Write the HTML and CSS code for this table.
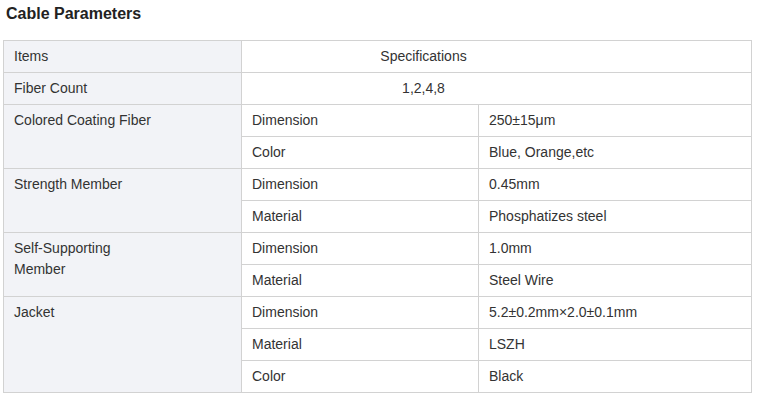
FILE: index.html
```html
<!DOCTYPE html>
<html>
<head>
<meta charset="utf-8">
<link rel="stylesheet" href="styles.css">
</head>
<body>
<div class="page">
  <h3 class="title">Cable Parameters</h3>
  <table class="params">
    <colgroup>
      <col class="c1"><col class="c2"><col class="c3">
    </colgroup>
    <tbody>
      <tr><td class="head">Items</td><td colspan="2" class="center">Specifications</td></tr>
      <tr><td class="head">Fiber Count</td><td colspan="2" class="center">1,2,4,8</td></tr>
      <tr><td class="head" rowspan="2">Colored Coating Fiber</td><td>Dimension</td><td>250±15μm</td></tr>
      <tr><td>Color</td><td>Blue, Orange,etc</td></tr>
      <tr><td class="head" rowspan="2">Strength Member</td><td>Dimension</td><td>0.45mm</td></tr>
      <tr><td>Material</td><td>Phosphatizes steel</td></tr>
      <tr><td class="head" rowspan="2">Self-Supporting<br>Member</td><td>Dimension</td><td>1.0mm</td></tr>
      <tr><td>Material</td><td>Steel Wire</td></tr>
      <tr><td class="head" rowspan="3">Jacket</td><td>Dimension</td><td>5.2±0.2mm×2.0±0.1mm</td></tr>
      <tr><td>Material</td><td>LSZH</td></tr>
      <tr><td>Color</td><td>Black</td></tr>
    </tbody>
  </table>
</div>
</body>
</html>
```
FILE: styles.css
```css
html, body {
  margin: 0;
  padding: 0;
  background: #ffffff;
}
.page {
  padding: 5px 0 0 3px;
  font-family: "Liberation Sans", Arial, sans-serif;
  color: #333333;
}
.title {
  margin: 0 0 0 3px;
  height: 35px;
  font-size: 16px;
  line-height: 18px;
  font-weight: bold;
  color: #222222;
}
.params {
  border-collapse: collapse;
  table-layout: fixed;
  width: 749px;
  font-size: 14px;
}
.c1 { width: 238px; }
.c2 { width: 237px; }
.c3 { width: 273px; }
.params td {
  border: 1px solid #d2d2d2;
  padding: 5px 10px 5px 10px;
  line-height: 21px;
  height: 21px;
  vertical-align: top;
  text-align: left;
}
.params td.head {
  background: #f2f3f7;
}
.params td.center {
  text-align: center;
  padding-right: 156px;
}
```
